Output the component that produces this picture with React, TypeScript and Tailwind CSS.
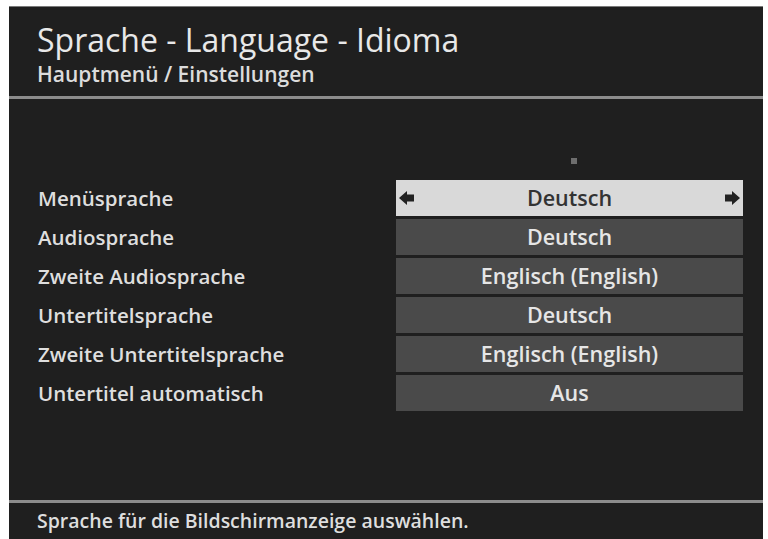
import React from "react";

const rows = [
  { label: "Menüsprache", value: "Deutsch", active: true },
  { label: "Audiosprache", value: "Deutsch" },
  { label: "Zweite Audiosprache", value: "Englisch (English)" },
  { label: "Untertitelsprache", value: "Deutsch" },
  { label: "Zweite Untertitelsprache", value: "Englisch (English)" },
  { label: "Untertitel automatisch", value: "Aus" },
];

function Arrow({ dir }: { dir: "left" | "right" }) {
  return (
    <svg width="15" height="14" viewBox="0 0 15 14" className="shrink-0">
      {dir === "left" ? (
        <path d="M0 7 L8 0 L8 3.5 L15 3.5 L15 10.5 L8 10.5 L8 14 Z" fill="#222222" />
      ) : (
        <path d="M15 7 L7 0 L7 3.5 L0 3.5 L0 10.5 L7 10.5 L7 14 Z" fill="#222222" />
      )}
    </svg>
  );
}

export default function App() {
  return (
    <div
      className="w-[768px] h-[539px] bg-white pl-[9px] pr-[5px] pt-[6px] overflow-hidden"
      style={{ fontFamily: '"Open Sans", "DejaVu Sans", sans-serif' }}
    >
      <div className="h-full bg-[#1f1f1f] border-t border-[#7a7a7a] flex flex-col">
        <div className="h-[89px] pl-[28px] pt-[15px]">
          <div className="text-[32px] leading-[36px] text-[#e8e8e8] whitespace-nowrap">Sprache - Language - Idioma</div>
          <div className="mt-[4px] text-[21px] leading-[24px] text-[#dcdcdc] font-semibold whitespace-nowrap">
            Hauptmenü / Einstellungen
          </div>
        </div>
        <div className="h-[3px] bg-[#8c8c8c]" />
        <div className="flex-1 flex flex-col pt-[58px]">
          <div className="flex pl-[562px] h-[23px]">
            <div className="w-[6px] h-[6px] mt-[1px] bg-[#6e6e6e]" />
          </div>
          {rows.map((r) => (
            <div key={r.label} className="flex items-center h-[36px] mb-[3px]">
              <div className="flex-1 pl-[29px] text-[20.5px] text-[#dedede] font-semibold whitespace-nowrap">{r.label}</div>
              <div
                className={
                  r.active
                    ? "w-[347px] h-[36px] mr-[20px] bg-[#d9d9d9] text-[#333333] flex items-center justify-between pl-[3px] pr-[3px]"
                    : "w-[347px] h-[36px] mr-[20px] bg-[#4a4a4a] text-[#e6e6e6] flex items-center justify-center"
                }
              >
                {r.active && <Arrow dir="left" />}
                <span className="text-[21.5px] font-semibold">{r.value}</span>
                {r.active && <Arrow dir="right" />}
              </div>
            </div>
          ))}
        </div>
        <div className="h-[3px] bg-[#8c8c8c]" />
        <div className="h-[36px] pl-[28px] flex items-center text-[19.5px] text-[#dedede] font-semibold whitespace-nowrap">
          Sprache für die Bildschirmanzeige auswählen.
        </div>
      </div>
    </div>
  );
}
